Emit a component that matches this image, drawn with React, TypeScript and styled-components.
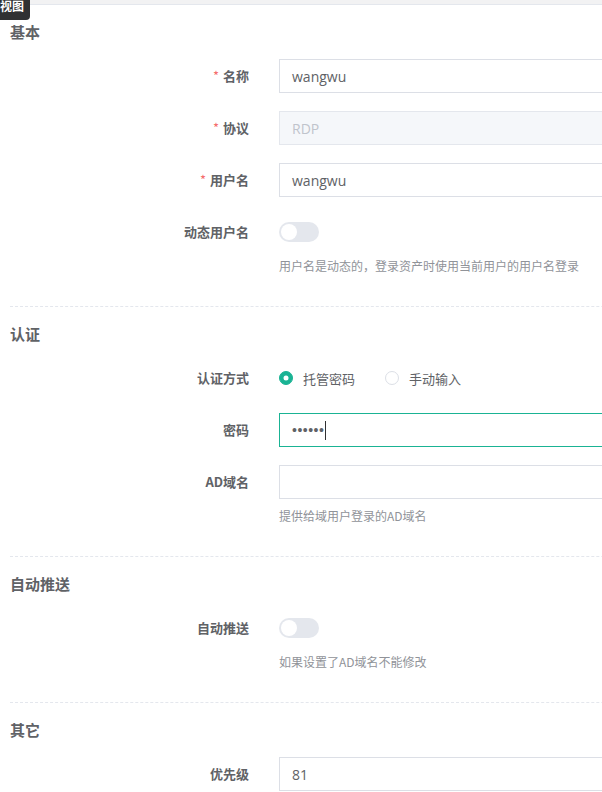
import React from 'react';
import styled, { createGlobalStyle } from 'styled-components';

const GlobalStyle = createGlobalStyle`
  html, body {
    margin: 0;
    padding: 0;
    background: #fff;
    overflow: hidden;
  }
  body {
    font-family: 'Open Sans', 'Noto Sans CJK SC', sans-serif;
    color: #606266;
  }
`;

const Page = styled.div`
  position: relative;
  width: 900px;
`;

const TopStrip = styled.div`
  height: 4px;
  background: #f2f2f3;
  border-bottom: 1px solid #e4e7ed;
`;

const Tooltip = styled.div`
  position: absolute;
  left: -6px;
  top: -4px;
  width: 36px;
  height: 24px;
  background: #303133;
  border-radius: 4px;
  color: #fff;
  font-family: 'Noto Sans CJK SC', sans-serif;
  font-size: 12px;
  font-weight: bold;
  line-height: 20px;
  text-align: center;
`;

const Form = styled.div`
  padding-left: 10px;
`;

const SectionTitle = styled.div`
  margin: 17px 0 17px;
  font-family: 'Noto Sans CJK SC', sans-serif;
  font-size: 15px;
  font-weight: bold;
  line-height: 20px;
  color: #606266;
`;

const Divider = styled.div`
  margin-top: 30px;
  border-top: 1px dashed #e4e7ed;
`;

const Row = styled.div`
  display: flex;
  margin-bottom: 18px;
`;

const Label = styled.div`
  width: 239px;
  flex-shrink: 0;
  text-align: right;
  font-family: 'Noto Sans CJK SC', sans-serif;
  font-size: 13px;
  font-weight: bold;
  line-height: 34px;
  color: #606266;
`;

const Star = styled.span`
  color: #f56c6c;
  margin-right: 4px;
  font-weight: normal;
`;

const Content = styled.div`
  flex: 1;
  padding-left: 30px;
`;

const Field = styled.div<{ $disabled?: boolean; $focused?: boolean }>`
  height: 34px;
  box-sizing: border-box;
  display: flex;
  align-items: center;
  padding: 0 12px;
  border: 1px solid
    ${p => (p.$focused ? '#1ab394' : p.$disabled ? '#e4e7ed' : '#dcdfe6')};
  background: ${p => (p.$disabled ? '#f5f7fa' : '#fff')};
  color: ${p => (p.$disabled ? '#c0c4cc' : '#606266')};
  font-size: 14px;
`;

const Dots = styled.span`
  font-family: 'Liberation Sans', sans-serif;
  font-size: 14px;
  letter-spacing: 0.5px;
  color: #606266;
`;

const Caret = styled.span`
  display: inline-block;
  width: 1px;
  height: 19px;
  margin-left: 1px;
  background: #303133;
`;

const Line = styled.div`
  height: 34px;
  display: flex;
  align-items: center;
`;

const Switch = styled.div`
  position: relative;
  width: 40px;
  height: 20px;
  border-radius: 10px;
  background: #e4e7ed;
  &::after {
    content: '';
    position: absolute;
    left: 2px;
    top: 2px;
    width: 16px;
    height: 16px;
    border-radius: 50%;
    background: #fff;
  }
`;

const Help = styled.div`
  margin-top: 7px;
  font-family: 'Noto Sans CJK SC', sans-serif;
  font-size: 12px;
  line-height: 20px;
  color: #909399;
`;

const Radio = styled.label`
  display: flex;
  align-items: center;
  margin-right: 30px;
  font-family: 'Noto Sans CJK SC', sans-serif;
  font-size: 13px;
  color: #606266;
`;

const RadioDot = styled.span<{ $checked?: boolean }>`
  position: relative;
  width: 14px;
  height: 14px;
  box-sizing: border-box;
  border-radius: 50%;
  margin-right: 10px;
  border: 1px solid ${p => (p.$checked ? '#1ab394' : '#dcdfe6')};
  background: ${p => (p.$checked ? '#1ab394' : '#fff')};
  &::after {
    content: '';
    display: ${p => (p.$checked ? 'block' : 'none')};
    position: absolute;
    left: 50%;
    top: 50%;
    width: 5px;
    height: 5px;
    border-radius: 50%;
    background: #fff;
    transform: translate(-50%, -50%);
  }
`;

type ItemProps = {
  label: string;
  required?: boolean;
  help?: string;
  children: React.ReactNode;
};

const Item = ({ label, required, help, children }: ItemProps) => (
  <Row>
    <Label>
      {required && <Star>*</Star>}
      {label}
    </Label>
    <Content>
      {children}
      {help && <Help>{help}</Help>}
    </Content>
  </Row>
);

export default function App() {
  return (
    <Page>
      <GlobalStyle />
      <TopStrip />
      <Tooltip>视图</Tooltip>
      <Form>
        <SectionTitle>基本</SectionTitle>
        <Item label="名称" required>
          <Field>wangwu</Field>
        </Item>
        <Item label="协议" required>
          <Field $disabled>RDP</Field>
        </Item>
        <Item label="用户名" required>
          <Field>wangwu</Field>
        </Item>
        <Item label="动态用户名" help="用户名是动态的，登录资产时使用当前用户的用户名登录">
          <Line>
            <Switch />
          </Line>
        </Item>
        <Divider />

        <SectionTitle>认证</SectionTitle>
        <Item label="认证方式">
          <Line>
            <Radio>
              <RadioDot $checked />
              托管密码
            </Radio>
            <Radio>
              <RadioDot />
              手动输入
            </Radio>
          </Line>
        </Item>
        <Item label="密码">
          <Field $focused>
            <Dots>••••••</Dots>
            <Caret />
          </Field>
        </Item>
        <Item label="AD域名" help="提供给域用户登录的AD域名">
          <Field />
        </Item>
        <Divider />

        <SectionTitle>自动推送</SectionTitle>
        <Item label="自动推送" help="如果设置了AD域名不能修改">
          <Line>
            <Switch />
          </Line>
        </Item>
        <Divider />

        <SectionTitle>其它</SectionTitle>
        <Item label="优先级">
          <Field>81</Field>
        </Item>
      </Form>
    </Page>
  );
}
